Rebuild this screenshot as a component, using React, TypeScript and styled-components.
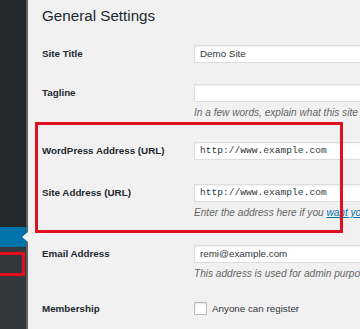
import React from 'react'
import styled, { createGlobalStyle } from 'styled-components'

const GlobalStyle = createGlobalStyle`
  html, body {
    margin: 0;
    padding: 0;
    background: #f1f1f1;
    overflow: hidden;
  }
  body {
    font-family: 'Liberation Sans', Arial, sans-serif;
    color: #23282d;
  }
`

const Shell = styled.div`
  display: flex;
  width: 360px;
  height: 329px;
  overflow: hidden;
`

const Sidebar = styled.div`
  flex: 0 0 26px;
  display: flex;
  flex-direction: column;
  border-right: 2px solid #5c6166;
`

const MenuTop = styled.div`
  flex: 0 0 227px;
  background: #23282d;
`

const ActiveItem = styled.div`
  position: relative;
  flex: 0 0 20px;
  background: #0073aa;

  &::after {
    content: '';
    position: absolute;
    right: -2px;
    top: 5px;
    border: 5px solid transparent;
    border-right: 6px solid #f1f1f1;
  }
`

const Submenu = styled.div`
  position: relative;
  flex: 1;
  background: #32373c;
`

const Callout = styled.div`
  position: absolute;
  border: 3px solid #e2101e;
  pointer-events: none;
`

const Main = styled.main`
  position: relative;
  flex: 1;
  min-width: 0;
  padding-left: 14px;
  overflow: hidden;
`

const Heading = styled.h1`
  margin: 0;
  padding-top: 6px;
  font-size: 15.2px;
  line-height: 20px;
  font-weight: 400;
  color: #23282d;
`

const Row = styled.div<{ $top: number }>`
  display: grid;
  grid-template-columns: 152px 1fr;
  padding-top: ${p => p.$top}px;
`

const Label = styled.div<{ $h?: number }>`
  font-size: 9.8px;
  font-weight: 700;
  line-height: ${p => p.$h ?? 18}px;
  color: #23282d;
  white-space: nowrap;
`

const Field = styled.div`
  display: flex;
  flex-direction: column;
  min-width: 0;
`

const Input = styled.div<{ $mono?: boolean }>`
  box-sizing: border-box;
  width: 245px;
  height: 18px;
  padding: 0 5px;
  background: #fff;
  border: 1px solid #ddd;
  box-shadow: inset 0 1px 2px rgba(0, 0, 0, 0.07);
  font-family: ${p =>
    p.$mono ? "'Liberation Mono', 'DejaVu Sans Mono', monospace" : "'Liberation Sans', Arial, sans-serif"};
  font-size: ${p => (p.$mono ? '9.6px' : '9.8px')};
  line-height: 16px;
  color: #32373c;
  white-space: nowrap;
`

const Description = styled.p`
  margin: 4px 0 0;
  font-size: 10.1px;
  font-style: italic;
  line-height: 14px;
  color: #666;
  white-space: nowrap;

  a {
    color: #0073aa;
  }
`

const CheckRow = styled.label`
  display: flex;
  align-items: center;
  gap: 5px;
  height: 13px;
  font-size: 9.8px;
  color: #32373c;
  white-space: nowrap;
`

const Checkbox = styled.span`
  box-sizing: border-box;
  width: 13px;
  height: 13px;
  background: #fff;
  border: 1px solid #b4b9be;
  border-radius: 1px;
  box-shadow: inset 0 1px 2px rgba(0, 0, 0, 0.1);
`

export default function App() {
  return (
    <>
      <GlobalStyle />
      <Shell>
        <Sidebar>
          <MenuTop />
          <ActiveItem />
          <Submenu>
            <Callout style={{ left: -6, top: 5, width: 25, height: 18 }} />
          </Submenu>
        </Sidebar>
        <Main>
          <Heading>General Settings</Heading>

          <Row $top={19}>
            <Label>Site Title</Label>
            <Field>
              <Input>Demo Site</Input>
            </Field>
          </Row>

          <Row $top={21}>
            <Label>Tagline</Label>
            <Field>
              <Input />
              <Description>In a few words, explain what this site is about.</Description>
            </Field>
          </Row>

          <Row $top={22}>
            <Label>WordPress Address (URL)</Label>
            <Field>
              <Input $mono>http://www.example.com</Input>
            </Field>
          </Row>

          <Row $top={24}>
            <Label>Site Address (URL)</Label>
            <Field>
              <Input $mono>http://www.example.com</Input>
              <Description>
                Enter the address here if you <a href="#">want your site home page to be different</a>
              </Description>
            </Field>
          </Row>

          <Row $top={25}>
            <Label>Email Address</Label>
            <Field>
              <Input>remi@example.com</Input>
              <Description>This address is used for admin purposes.</Description>
            </Field>
          </Row>

          <Row $top={21}>
            <Label $h={13}>Membership</Label>
            <Field>
              <CheckRow>
                <Checkbox />
                Anyone can register
              </CheckRow>
            </Field>
          </Row>

          <Callout style={{ left: 7, top: 122, width: 302, height: 105 }} />
        </Main>
      </Shell>
    </>
  )
}
